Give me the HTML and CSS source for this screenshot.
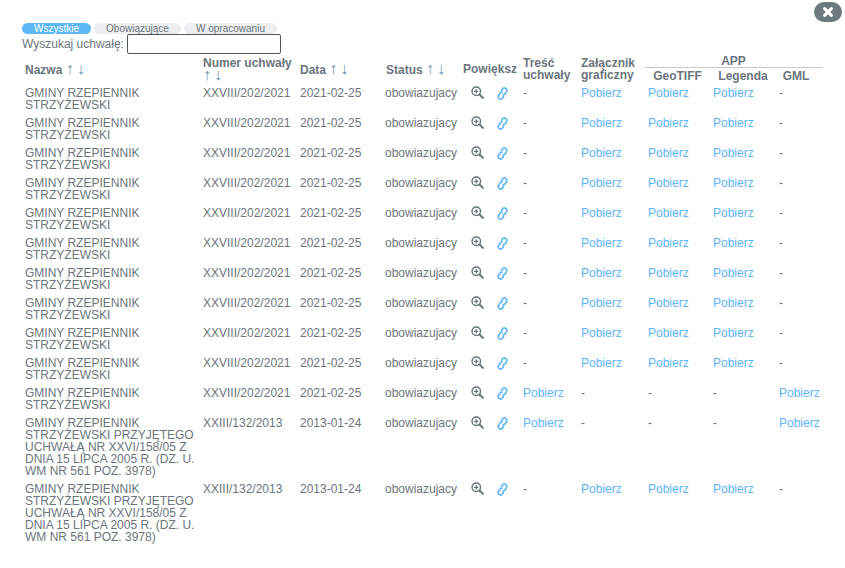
FILE: index.html
```html
<!DOCTYPE html>
<html lang="pl">
<head>
<meta charset="utf-8">
<title>Uchwały</title>
<link rel="stylesheet" href="styles.css">
</head>
<body>
<svg class="sprites" width="0" height="0" aria-hidden="true">
  <symbol id="zoom" viewBox="0 0 14 14">
    <circle cx="5.7" cy="5.7" r="4.6" fill="none" stroke="currentColor" stroke-width="1.5"/>
    <path d="M3.4 5.7h4.6M5.7 3.4v4.6" fill="none" stroke="currentColor" stroke-width="1.4"/>
    <path d="M9.2 9.2l3.6 3.6" fill="none" stroke="currentColor" stroke-width="2.2" stroke-linecap="round"/>
  </symbol>
  <symbol id="chain" viewBox="0 0 14 14">
    <g transform="rotate(-14 7 7)">
      <path d="M6.2 4.3l2-2.1a2.1 2.1 0 0 1 3 0l.6.6a2.1 2.1 0 0 1 0 3L9.6 8a2.1 2.1 0 0 1-3 0" fill="none" stroke="currentColor" stroke-width="1.8"/>
      <path d="M7.8 9.7l-2 2.1a2.1 2.1 0 0 1-3 0l-.6-.6a2.1 2.1 0 0 1 0-3L4.4 6a2.1 2.1 0 0 1 3 0" fill="none" stroke="currentColor" stroke-width="1.8"/>
    </g>
  </symbol>
</svg>
<button class="close" type="button" aria-label="Zamknij">
  <svg viewBox="0 0 12 12" width="12" height="12"><path d="M2.6 2.6l6.8 6.8M9.4 2.6l-6.8 6.8" fill="none" stroke="#fff" stroke-width="3.2" stroke-linecap="round"/></svg>
</button>
<div class="tabs">
  <span class="tab tab-active tab-a">Wszystkie</span>
  <span class="tab tab-b">Obowiązujące</span>
  <span class="tab tab-c">W opracowaniu</span>
</div>
<div class="search"><label for="q">Wyszukaj uchwałę:</label><input id="q" type="text"></div>
<table class="grid">
  <colgroup>
    <col class="c1"><col class="c2"><col class="c3"><col class="c4"><col class="c5">
    <col class="c6"><col class="c7"><col class="c8"><col class="c9"><col class="c10">
  </colgroup>
  <thead>
    <tr>
      <th rowspan="2">Nazwa <span class="arrows">↑ ↓</span></th>
      <th rowspan="2">Numer uchwały <span class="arrows">↑ ↓</span></th>
      <th rowspan="2">Data <span class="arrows">↑ ↓</span></th>
      <th rowspan="2" class="status-h">Status <span class="arrows">↑ ↓</span></th>
      <th rowspan="2">Powiększ</th>
      <th rowspan="2">Treść uchwały</th>
      <th rowspan="2">Załącznik graficzny</th>
      <th colspan="3" class="app">APP</th>
    </tr>
    <tr>
      <th class="sub">GeoTIFF</th>
      <th class="sub">Legenda</th>
      <th class="sub sub-gml">GML</th>
    </tr>
  </thead>
  <tbody id="rows"></tbody>
</table>
<script src="app.js"></script>
</body>
</html>
```
FILE: styles.css
```css
html, body { margin: 0; padding: 0; background: #fff; }
body {
  width: 845px;
  height: 568px;
  overflow: hidden;
  position: relative;
  font-family: "Liberation Sans", Arial, sans-serif;
  font-size: 12px;
  line-height: 12px;
  color: #6c757d;
}
.sprites { position: absolute; }
.close {
  position: absolute;
  left: 814px;
  top: 2px;
  width: 28px;
  height: 20px;
  padding: 0;
  border: 0;
  border-radius: 10px;
  background: #6c7a7d;
  display: flex;
  align-items: center;
  justify-content: center;
}
.tabs {
  display: flex;
  gap: 3px;
  padding: 23px 0 0 22px;
}
.tab {
  height: 11px;
  line-height: 12px;
  border-radius: 6px;
  background: #eceef0;
  font-size: 10px;
  text-align: center;
}
.tab-a { width: 69px; }
.tab-b { width: 87px; }
.tab-c { width: 93px; }
.tab-active { background: #5cb8f7; color: #fff; }
.search {
  display: flex;
  align-items: flex-start;
  padding-left: 22px;
  height: 20px;
}
.search label { padding-top: 4px; width: 105px; line-height: 12px; white-space: nowrap; }
.search input {
  box-sizing: border-box;
  width: 154px;
  height: 20px;
  margin: 0;
  border: 1px solid #555;
  border-radius: 2px;
  background: #fff;
}
.grid {
  border-collapse: separate;
  border-spacing: 0;
  table-layout: fixed;
  width: 800px;
  margin: 0 0 0 22px;
}
.c1 { width: 178px; }
.c2 { width: 97px; }
.c3 { width: 85px; }
.c4 { width: 78px; }
.c5 { width: 60px; }
.c6 { width: 58px; }
.c7 { width: 67px; }
.c8 { width: 65px; }
.c9 { width: 66px; }
.c10 { width: 46px; }
th {
  padding: 0 0 0 3px;
  text-align: left;
  font-weight: bold;
  vertical-align: middle;
  line-height: 12px;
}
.status-h { padding-left: 4px; }
th.app {
  height: 13px;
  padding: 0;
  text-align: center;
  font-weight: bold;
  border-bottom: 1px solid #c9c9c9;
  line-height: 12px;
}
th.sub { text-align: center; padding: 2px 0; }
th.sub-gml { padding-right: 6px; }
.arrows { color: #6f93ad; font-weight: normal; font-size: 16px; line-height: 12px; word-spacing: -1.5px; white-space: nowrap; }
td {
  padding: 3px 0 3px 3px;
  vertical-align: top;
  line-height: 12px;
  overflow: hidden;
}
a { color: #5db4fb; text-decoration: none; }
.icon { display: block; width: 13px; height: 13px; }
.icons { padding-top: 2px; padding-bottom: 0; white-space: nowrap; }
.icons-wrap { display: flex; gap: 12px; padding-left: 8px; }
.ic-zoom { color: #66757c; }
.ic-link { color: #5db4fb; margin-top: 1px; }
```
FILE: app.js
```js
var shortName = 'GMINY RZEPIENNIK STRZYŻEWSKI';
var longName = 'GMINY RZEPIENNIK STRZYŻEWSKI PRZYJĘTEGO UCHWAŁĄ NR XXVI/158/05 Z DNIA 15 LIPCA 2005 R. (DZ. U. WM NR 561 POZ. 3978)';
var rows = [];
var i;
for (i = 0; i < 10; i++) {
  rows.push([shortName, 'XXVIII/202/2021', '2021-02-25', 0, 1, 1, 1, 0]);
}
rows.push([shortName, 'XXVIII/202/2021', '2021-02-25', 1, 0, 0, 0, 1]);
rows.push([longName, 'XXIII/132/2013', '2013-01-24', 1, 0, 0, 0, 1]);
rows.push([longName, 'XXIII/132/2013', '2013-01-24', 0, 1, 1, 1, 0]);

function cell(on) {
  return '<td>' + (on ? '<a href="#">Pobierz</a>' : '-') + '</td>';
}
var html = '';
rows.forEach(function (r) {
  html += '<tr><td>' + r[0] + '</td><td>' + r[1] + '</td><td>' + r[2] + '</td><td>obowiazujacy</td>' +
    '<td class="icons"><div class="icons-wrap">' +
    '<svg class="icon ic-zoom"><use href="#zoom"/></svg>' +
    '<svg class="icon ic-link"><use href="#chain"/></svg></div></td>' +
    cell(r[3]) + cell(r[4]) + cell(r[5]) + cell(r[6]) + cell(r[7]) + '</tr>';
});
document.getElementById('rows').innerHTML = html;
```
